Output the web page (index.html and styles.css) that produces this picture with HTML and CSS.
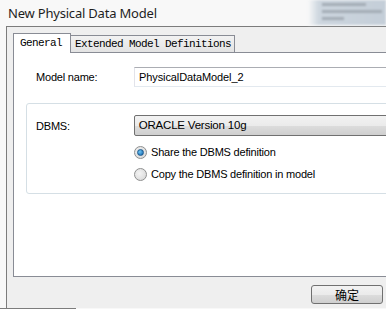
FILE: index.html
```html
<!DOCTYPE html>
<html lang="en">
<head>
  <meta charset="UTF-8" />
  <title>New Physical Data Model</title>
  <link rel="stylesheet" href="styles.css">
</head>
<body>
  <div class="titlebar">
    <span class="title">New Physical Data Model</span>
    <div class="behind">
      <div class="smudge s1"></div>
      <div class="smudge s2"></div>
      <div class="smudge s3"></div>
    </div>
  </div>

  <div class="dialog">
    <div class="tabs">
      <div class="tab active">General</div>
      <div class="tab">Extended Model Definitions</div>
    </div>

    <div class="panel">
      <div class="row">
        <span class="label">Model name:</span>
        <div class="textbox">PhysicalDataModel_2</div>
      </div>

      <div class="group">
        <div class="row">
          <span class="label">DBMS:</span>
          <div class="combo">ORACLE Version 10g</div>
        </div>
        <div class="options">
          <label class="option"><span class="radio checked"></span>Share the DBMS definition</label>
          <label class="option"><span class="radio"></span>Copy the DBMS definition in model</label>
        </div>
      </div>
    </div>

    <div class="buttons">
      <button class="btn">确定</button>
    </div>
  </div>
  <div class="edge"></div>
</body>
</html>
```

FILE: styles.css
```css
body {
  margin: 0;
  width: 386px;
  height: 309px;
  overflow: hidden;
  background: #f8f8f8;
  font-family: "Liberation Sans", Arial, sans-serif;
  font-size: 11px;
  color: #000;
}
.titlebar {
  height: 26px;
  display: flex;
  align-items: center;
  padding-left: 8px;
}
.title {
  font-family: "Noto Sans", "Open Sans", sans-serif;
  font-size: 13px;
  color: #1e1e1e;
  letter-spacing: -0.2px;
}
.behind {
  margin-left: auto;
  width: 78px;
  height: 25px;
  align-self: flex-start;
  background: linear-gradient(90deg, #f8f8f8 0%, #cdd6df 14%, #c4ced8 100%);
  filter: blur(1.2px);
  display: flex;
  flex-direction: column;
  gap: 4px;
  padding: 3px 0 0 14px;
  box-sizing: border-box;
}
.smudge {
  height: 3px;
  background: #9aa2ab;
  opacity: 0.8;
}
.s1 { width: 44px; }
.s2 { width: 60px; }
.s3 { width: 22px; }

.dialog {
  margin-left: 6px;
  height: 282px;
  box-sizing: border-box;
  border-left: 1px solid #7c7c7c;
  border-top: 1px solid #7c7c7c;
  background: #efefef;
  display: flex;
  flex-direction: column;
  overflow: hidden;
}
.tabs {
  display: flex;
  align-items: flex-end;
  padding: 6px 0 0 6px;
}
.tab {
  height: 17px;
  width: 164px;
  box-sizing: border-box;
  padding: 0 0 0 4px;
  border: 1px solid #898c95;
  border-left: none;
  border-bottom: none;
  background: linear-gradient(#f2f2f2, #e3e3e3);
  font-family: "Liberation Mono", "Courier New", monospace;
  font-size: 11px;
  letter-spacing: -0.6px;
  line-height: 16px;
  white-space: nowrap;
  overflow: hidden;
}
.tab.active {
  width: 58px;
  height: 20px;
  border-left: 1px solid #898c95;
  background: #fff;
  margin-bottom: -1px;
  position: relative;
  z-index: 1;
  line-height: 18px;
  padding-left: 6px;
}
.panel {
  margin-left: 6px;
  width: 400px;
  height: 225px;
  box-sizing: border-box;
  border: 1px solid #898c95;
  background: #fff;
  padding-top: 14px;
}
.row {
  display: flex;
  align-items: center;
  padding-left: 22px;
}
.label {
  width: 98px;
  letter-spacing: -0.2px;
}
.textbox {
  width: 260px;
  height: 20px;
  box-sizing: border-box;
  border: 1px solid #abadb3;
  border-bottom-color: #e3e9ef;
  border-left-color: #e2e3ea;
  padding-left: 4px;
  line-height: 18px;
  letter-spacing: -0.1px;
}
.group {
  margin: 16px 0 0 12px;
  width: 368px;
  height: 91px;
  box-sizing: border-box;
  border: 1px solid #d5dfe5;
  border-radius: 3px;
  padding-top: 11px;
}
.group .row {
  padding-left: 9px;
}
.combo {
  width: 260px;
  height: 21px;
  box-sizing: border-box;
  border: 1px solid #707070;
  border-radius: 2px;
  background: linear-gradient(#f2f2f2 0%, #ebebeb 50%, #dddddd 51%, #cfcfcf 100%);
  padding-left: 4px;
  line-height: 19px;
  font-size: 11.5px;
  letter-spacing: -0.2px;
}
.options {
  margin: 5px 0 0 107px;
}
.option {
  height: 22px;
  display: flex;
  align-items: center;
  gap: 4px;
  letter-spacing: -0.2px;
}
.radio {
  width: 13px;
  height: 13px;
  box-sizing: border-box;
  border-radius: 50%;
  border: 1px solid #8e8f8f;
  background: radial-gradient(circle at 40% 40%, #f4f4f4, #d4d4d4);
  display: flex;
  align-items: center;
  justify-content: center;
}
.radio.checked::after {
  content: "";
  width: 5px;
  height: 5px;
  border-radius: 50%;
  background: radial-gradient(circle at 35% 35%, #6fc6f5, #0d5fa8);
  border: 1px solid #1c5a8e;
}
.buttons {
  display: flex;
  justify-content: flex-end;
  padding: 8px 3px 0 0;
}
.btn {
  width: 72px;
  height: 19px;
  box-sizing: border-box;
  border: 1px solid #707070;
  border-radius: 3px;
  background: linear-gradient(#f2f2f2 0%, #ebebeb 50%, #dddddd 51%, #cfcfcf 100%);
  font-family: "Noto Sans CJK SC", sans-serif;
  font-size: 12px;
  line-height: 15px;
  padding: 0;
}
.edge {
  width: 76px;
  height: 1px;
  background: #7c7c7c;
}
```
